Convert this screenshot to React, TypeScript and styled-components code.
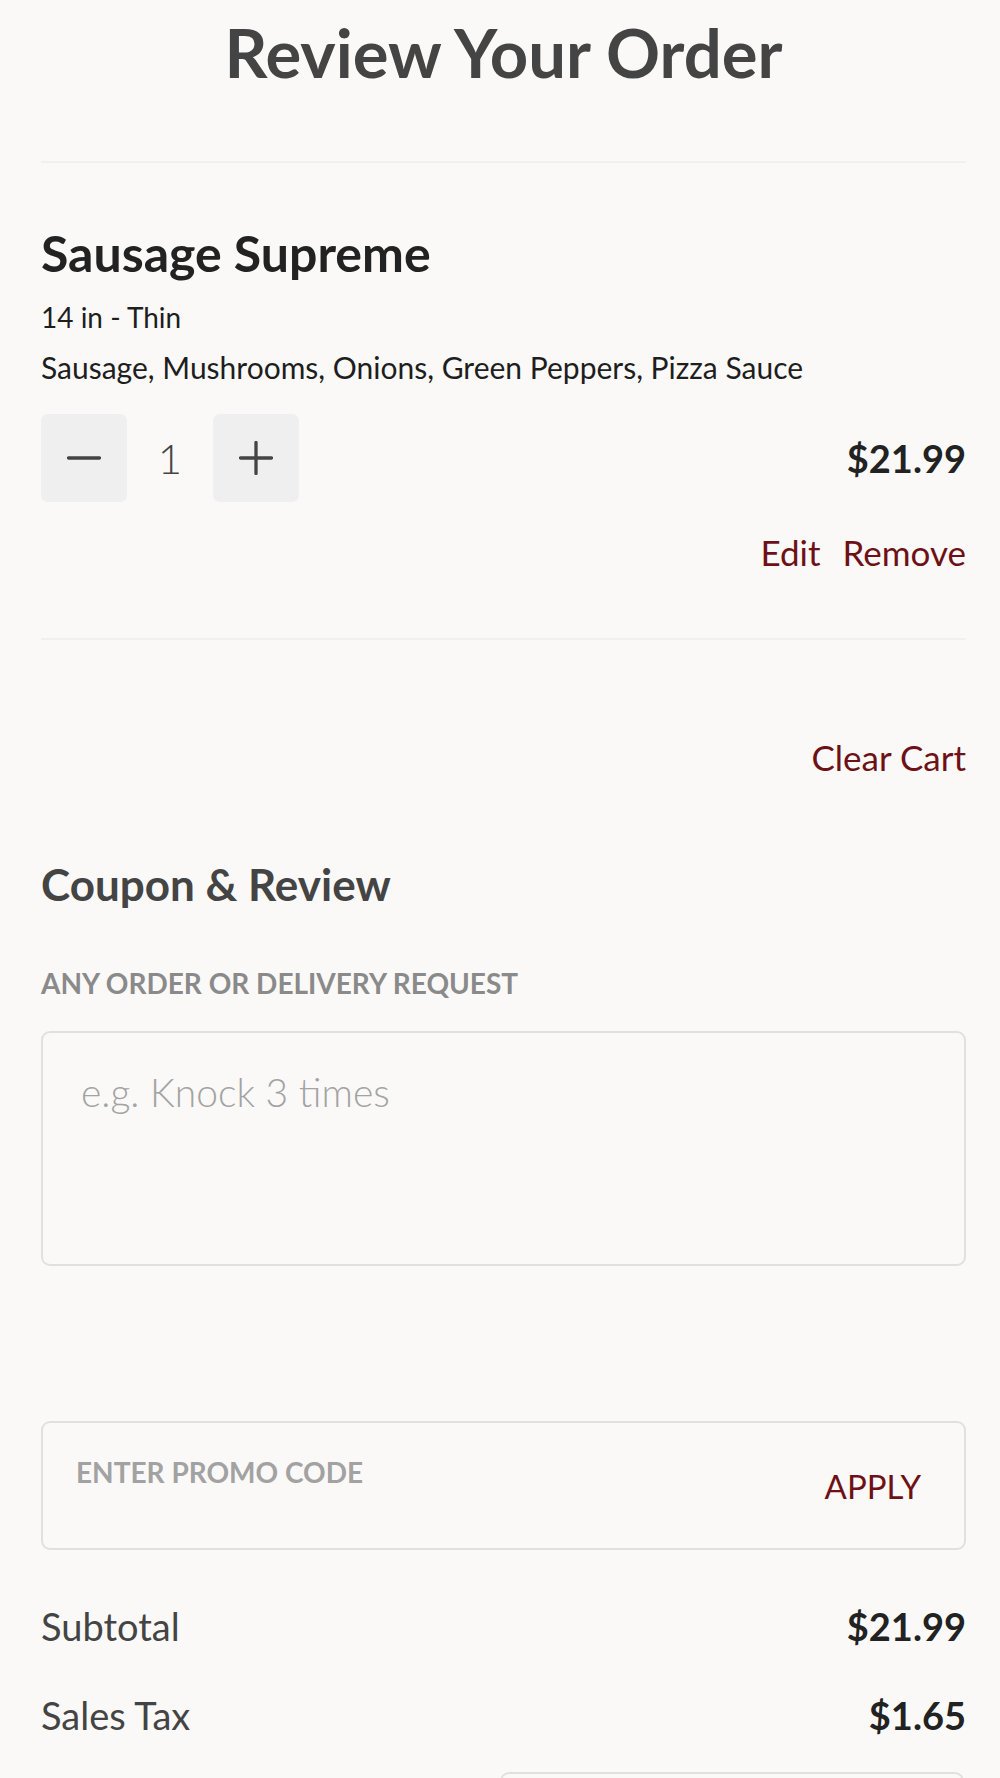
import React from "react";
import styled, { createGlobalStyle } from "styled-components";

const GlobalStyle = createGlobalStyle`
  html, body {
    margin: 0;
    padding: 0;
    background: #faf9f8;
  }
  body {
    font-family: Lato, "Liberation Sans", sans-serif;
    color: #222;
  }
  * { box-sizing: border-box; }
`;

const Page = styled.main`
  padding: 12px 34px 0 41px;
  display: flex;
  flex-direction: column;
`;

const Title = styled.h1`
  margin: 0;
  font-size: 67px;
  line-height: 80px;
  font-weight: 700;
  color: #444;
  text-align: center;
`;

const Divider = styled.hr<{ $top: number }>`
  margin: ${(p) => p.$top}px 0 0;
  border: none;
  height: 2px;
  background: #f2f0ef;
`;

const Item = styled.section`
  display: flex;
  flex-direction: column;
  margin-top: 62px;
`;

const ItemName = styled.h2`
  margin: 0;
  font-size: 50px;
  line-height: 56px;
  font-weight: 700;
  color: #222;
`;

const Detail = styled.p<{ $first?: boolean }>`
  margin: ${(p) => (p.$first ? "11px" : "0")} 0 0;
  font-size: ${(p) => (p.$first ? 28 : 30)}px;
  line-height: 50px;
  font-weight: 400;
  color: #1e1e1e;
`;

const QtyRow = styled.div`
  margin-top: 22px;
  display: flex;
  align-items: center;
  justify-content: space-between;
`;

const Stepper = styled.div`
  display: flex;
  align-items: center;
`;

const StepButton = styled.button`
  width: 86px;
  height: 88px;
  border: none;
  border-radius: 7px;
  background: #efefef;
  display: flex;
  align-items: center;
  justify-content: center;
  padding: 0;
  cursor: pointer;
`;

const Qty = styled.span`
  width: 86px;
  text-align: center;
  font-size: 42px;
  font-weight: 300;
  color: #444;
  line-height: 88px;
`;

const Price = styled.span`
  font-size: 38px;
  font-weight: 700;
  color: #222;
`;

const Actions = styled.div`
  margin-top: 30px;
  display: flex;
  justify-content: flex-end;
  gap: 22px;
`;

const LinkButton = styled.button<{ $size?: number }>`
  border: none;
  background: none;
  padding: 0;
  font-family: inherit;
  font-size: ${(p) => p.$size ?? 35}px;
  line-height: 40px;
  font-weight: 400;
  color: #6e1116;
  cursor: pointer;
`;

const ClearRow = styled.div`
  margin-top: 97px;
  display: flex;
  justify-content: flex-end;
`;

const SectionTitle = styled.h3`
  margin: 82px 0 0;
  font-size: 44px;
  line-height: 50px;
  font-weight: 700;
  color: #444;
`;

const FieldLabel = styled.label`
  margin-top: 57px;
  font-size: 28px;
  line-height: 34px;
  font-weight: 700;
  color: #8a8a8a;
`;

const Notes = styled.textarea`
  margin-top: 31px;
  height: 235px;
  width: 100%;
  resize: none;
  border: 2px solid #e2e0df;
  border-radius: 9px;
  background: #faf9f8;
  padding: 35px 38px;
  font-family: Lato, "Liberation Sans", sans-serif;
  font-size: 39px;
  line-height: 48px;
  font-weight: 300;
  color: #222;
  &::placeholder {
    color: #a3a3a3;
  }
`;

const PromoBox = styled.div`
  margin-top: 155px;
  height: 129px;
  border: 2px solid #e2e0df;
  border-radius: 9px;
  display: flex;
  align-items: center;
  justify-content: space-between;
  padding: 0 43px 0 33px;
`;

const PromoInput = styled.input`
  align-self: flex-start;
  margin-top: 32px;
  height: 34px;
  border: none;
  background: transparent;
  padding: 0;
  outline: none;
  font-family: Lato, "Liberation Sans", sans-serif;
  font-size: 28px;
  line-height: 34px;
  font-weight: 700;
  width: 400px;
  &::placeholder {
    color: #a2a2a2;
  }
`;

const Totals = styled.div`
  margin-top: 51px;
  display: flex;
  flex-direction: column;
  gap: 39px;
`;

const TotalRow = styled.div`
  display: flex;
  justify-content: space-between;
  align-items: center;
  line-height: 50px;
`;

const TotalLabel = styled.span`
  font-size: 38px;
  font-weight: 400;
  color: #444;
`;

const TotalValue = styled.span`
  font-size: 38px;
  font-weight: 700;
  color: #222;
`;

const TipBox = styled.div`
  margin: 32px 2px 0 auto;
  width: 464px;
  height: 90px;
  border: 2px solid #e2e0df;
  border-radius: 9px;
`;

const Icon = ({ plus }: { plus?: boolean }) => (
  <svg width="34" height="34" viewBox="0 0 34 34" fill="none">
    <line x1="1.5" y1="17" x2="32.5" y2="17" stroke="#444" strokeWidth="3.3" strokeLinecap="round" />
    {plus && <line x1="17" y1="1.5" x2="17" y2="32.5" stroke="#444" strokeWidth="3.3" strokeLinecap="round" />}
  </svg>
);

export default function App() {
  return (
    <>
      <GlobalStyle />
      <Page>
        <Title>Review Your Order</Title>
        <Divider $top={69} />
        <Item>
          <ItemName>Sausage Supreme</ItemName>
          <Detail $first>14 in - Thin</Detail>
          <Detail>Sausage, Mushrooms, Onions, Green Peppers, Pizza Sauce</Detail>
          <QtyRow>
            <Stepper>
              <StepButton aria-label="Decrease">
                <Icon />
              </StepButton>
              <Qty>1</Qty>
              <StepButton aria-label="Increase">
                <Icon plus />
              </StepButton>
            </Stepper>
            <Price>$21.99</Price>
          </QtyRow>
          <Actions>
            <LinkButton>Edit</LinkButton>
            <LinkButton>Remove</LinkButton>
          </Actions>
        </Item>
        <Divider $top={66} />
        <ClearRow>
          <LinkButton>Clear Cart</LinkButton>
        </ClearRow>
        <SectionTitle>Coupon &amp; Review</SectionTitle>
        <FieldLabel>ANY ORDER OR DELIVERY REQUEST</FieldLabel>
        <Notes placeholder="e.g. Knock 3 times" />
        <PromoBox>
          <PromoInput placeholder="ENTER PROMO CODE" />
          <LinkButton $size={33}>APPLY</LinkButton>
        </PromoBox>
        <Totals>
          <TotalRow>
            <TotalLabel>Subtotal</TotalLabel>
            <TotalValue>$21.99</TotalValue>
          </TotalRow>
          <TotalRow>
            <TotalLabel>Sales Tax</TotalLabel>
            <TotalValue>$1.65</TotalValue>
          </TotalRow>
        </Totals>
        <TipBox />
      </Page>
    </>
  );
}
